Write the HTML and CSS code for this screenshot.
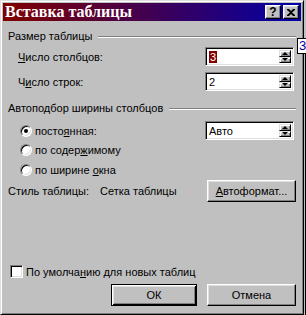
FILE: index.html
```html
<!DOCTYPE html>
<html lang="ru">
<head>
    <meta charset="UTF-8">
    <title>Вставка таблицы</title>
    <link rel="stylesheet" href="styles.css">
</head>
<body>
    <div class="window">
        <div class="titlebar">
            <span class="title">Вставка таблицы</span>
            <div class="tb-btn tb-help">?</div>
            <div class="tb-btn">
                <svg width="8" height="7" viewBox="0 0 8 7"><path d="M0 0h2l2 2 2-2h2v1L5 3.5 8 6v1H6L4 5 2 7H0V6l3-2.5L0 1z" fill="#000"/></svg>
            </div>
        </div>

        <div class="content">
            <div class="group-head">Размер таблицы</div>
            <div class="field-row">
                <span><u>Ч</u>исло столбцов:</span>
                <div class="spin">
                    <span class="spin-value"><span class="selected">3</span></span>
                    <div class="spin-btns">
                        <div class="spin-btn"><i class="arrow-up"></i></div>
                        <div class="spin-btn"><i class="arrow-down"></i></div>
                    </div>
                </div>
            </div>
            <div class="field-row row-gap">
                <span>Ч<u>и</u>сло строк:</span>
                <div class="spin">
                    <span class="spin-value">2</span>
                    <div class="spin-btns">
                        <div class="spin-btn"><i class="arrow-up"></i></div>
                        <div class="spin-btn"><i class="arrow-down"></i></div>
                    </div>
                </div>
            </div>

            <div class="group-head group-two">Автоподбор ширины столбцов</div>
            <div class="radio-row first">
                <span class="radio checked"></span>
                <span class="radio-text">посто<u>я</u>нная:</span>
                <div class="spin">
                    <span class="spin-value">Авто</span>
                    <div class="spin-btns">
                        <div class="spin-btn"><i class="arrow-up"></i></div>
                        <div class="spin-btn"><i class="arrow-down"></i></div>
                    </div>
                </div>
            </div>
            <div class="radio-row">
                <span class="radio"></span>
                <span class="radio-text">по содер<u>ж</u>имому</span>
            </div>
            <div class="radio-row">
                <span class="radio"></span>
                <span class="radio-text">по ширине <u>о</u>кна</span>
            </div>

            <div class="style-row">
                <span class="style-label">Стиль таблицы:</span>
                <span>Сетка таблицы</span>
                <button class="btn btn-format"><u>А</u>втоформат...</button>
            </div>

            <div class="check-row">
                <span class="checkbox"></span>
                <span>По умолча<u>н</u>ию для новых таблиц</span>
            </div>

            <div class="button-row">
                <button class="btn btn-default">ОК</button>
                <button class="btn btn-cancel">Отмена</button>
            </div>
        </div>
    </div>

    <div class="side-note">3</div>
    <div class="side-line"></div>
</body>
</html>
```

FILE: styles.css
```css
body {
    margin: 0;
    width: 306px;
    height: 315px;
    overflow: hidden;
    position: relative;
    background-color: #c0c0c0;
    font-family: "Liberation Sans", Arial, sans-serif;
    font-size: 11px;
    color: #000;
}
u {
    text-decoration: underline;
    text-underline-offset: 1px;
}
.window {
    width: 304px;
    height: 315px;
    box-sizing: border-box;
    border: 1px solid;
    border-color: #dfdfdf #000 #000 #dfdfdf;
    box-shadow: inset 1px 1px #fff, inset -1px -1px #808080;
    padding: 2px;
    background-color: #c0c0c0;
    display: flex;
    flex-direction: column;
}
.titlebar {
    height: 18px;
    display: flex;
    align-items: center;
    padding: 0 2px;
    background: linear-gradient(to right, #800000, #0000a8);
}
.title {
    flex: 1;
    color: #fff;
    font-family: "Liberation Serif", "Times New Roman", serif;
    font-weight: bold;
    font-size: 16px;
    line-height: 18px;
}
.tb-btn {
    width: 16px;
    height: 14px;
    box-sizing: border-box;
    background-color: #c0c0c0;
    border: 1px solid;
    border-color: #fff #000 #000 #fff;
    box-shadow: inset -1px -1px #808080, inset 1px 1px #dfdfdf;
    display: flex;
    align-items: center;
    justify-content: center;
}
.tb-help {
    margin-right: 2px;
    font-weight: bold;
    font-size: 12px;
    line-height: 12px;
}
.content {
    flex: 1;
    padding: 9px 5px 0 5px;
    display: flex;
    flex-direction: column;
}
.group-head {
    display: flex;
    align-items: center;
    height: 13px;
    line-height: 13px;
}
.group-head::after {
    content: "";
    flex: 1;
    border-top: 1px solid #808080;
    border-bottom: 1px solid #fff;
    margin-left: 6px;
}
.group-two {
    margin-top: 11px;
}
.field-row {
    display: flex;
    align-items: center;
    justify-content: space-between;
    height: 19px;
    margin-top: 4px;
    padding-left: 10px;
}
.row-gap {
    margin-top: 6px;
}
.spin {
    width: 89px;
    height: 19px;
    box-sizing: border-box;
    margin-right: 2px;
    margin-left: auto;
    background-color: #fff;
    border: 1px solid;
    border-color: #808080 #fff #fff #808080;
    box-shadow: inset 1px 1px #000, inset -1px -1px #dfdfdf;
    padding: 2px;
    display: flex;
}
.spin-value {
    flex: 1;
    line-height: 15px;
    padding-left: 1px;
}
.selected {
    background-color: #800000;
    color: #fff;
    padding: 0 1px;
}
.spin-btns {
    width: 12px;
    display: flex;
    flex-direction: column;
}
.spin-btn {
    flex: 1;
    box-sizing: border-box;
    background-color: #c0c0c0;
    border: 1px solid;
    border-color: #dfdfdf #000 #000 #dfdfdf;
    box-shadow: inset 1px 1px #fff, inset -1px -1px #808080;
    display: flex;
    align-items: center;
    justify-content: center;
}
.arrow-up, .arrow-down {
    width: 0;
    height: 0;
    border-left: 3px solid transparent;
    border-right: 3px solid transparent;
}
.arrow-up {
    border-bottom: 3px solid #000;
}
.arrow-down {
    border-top: 3px solid #000;
}
.radio-row {
    display: flex;
    align-items: center;
    height: 20px;
    padding-left: 12px;
}
.radio-row.first {
    height: 19px;
    margin-top: 6px;
}
.radio {
    width: 12px;
    height: 12px;
    box-sizing: border-box;
    border-radius: 50%;
    background-color: #fff;
    border: 1px solid;
    border-color: #808080 #fff #fff #808080;
    box-shadow: inset 1px 1px #000, inset -1px -1px #dfdfdf;
    display: flex;
    align-items: center;
    justify-content: center;
}
.radio.checked::after {
    content: "";
    width: 4px;
    height: 4px;
    border-radius: 50%;
    background-color: #000;
}
.radio-text {
    margin-left: 3px;
}
.style-row {
    display: flex;
    align-items: center;
    height: 22px;
}
.style-label {
    width: 92px;
}
.btn {
    height: 22px;
    box-sizing: border-box;
    padding: 0;
    background-color: #c0c0c0;
    border: 1px solid;
    border-color: #fff #000 #000 #fff;
    box-shadow: inset -1px -1px #808080, inset 1px 1px #dfdfdf;
    font-family: inherit;
    font-size: 11px;
    color: #000;
}
.btn-format {
    width: 89px;
    margin-left: auto;
}
.check-row {
    display: flex;
    align-items: center;
    height: 13px;
    margin-top: 63px;
    padding-left: 2px;
}
.checkbox {
    width: 13px;
    height: 13px;
    box-sizing: border-box;
    margin-right: 3px;
    background-color: #fff;
    border: 1px solid;
    border-color: #808080 #fff #fff #808080;
    box-shadow: inset 1px 1px #000, inset -1px -1px #dfdfdf;
}
.button-row {
    display: flex;
    justify-content: flex-end;
    gap: 10px;
    margin-top: 6px;
}
.btn-default {
    width: 86px;
    border-color: #000;
    box-shadow: inset 1px 1px #fff, inset -1px -1px #000, inset 2px 2px #dfdfdf, inset -2px -2px #808080;
}
.btn-cancel {
    width: 89px;
}
.side-note {
    position: absolute;
    left: 297px;
    top: 38px;
    width: 9px;
    height: 16px;
    box-sizing: border-box;
    background-color: #fff;
    border: 1px solid #000;
    border-right: none;
    padding-left: 1px;
    color: #0000a8;
    font-size: 13px;
    line-height: 14px;
    overflow: hidden;
}
.side-line {
    position: absolute;
    left: 305px;
    top: 54px;
    bottom: 0;
    width: 1px;
    background-color: #000;
}
```
